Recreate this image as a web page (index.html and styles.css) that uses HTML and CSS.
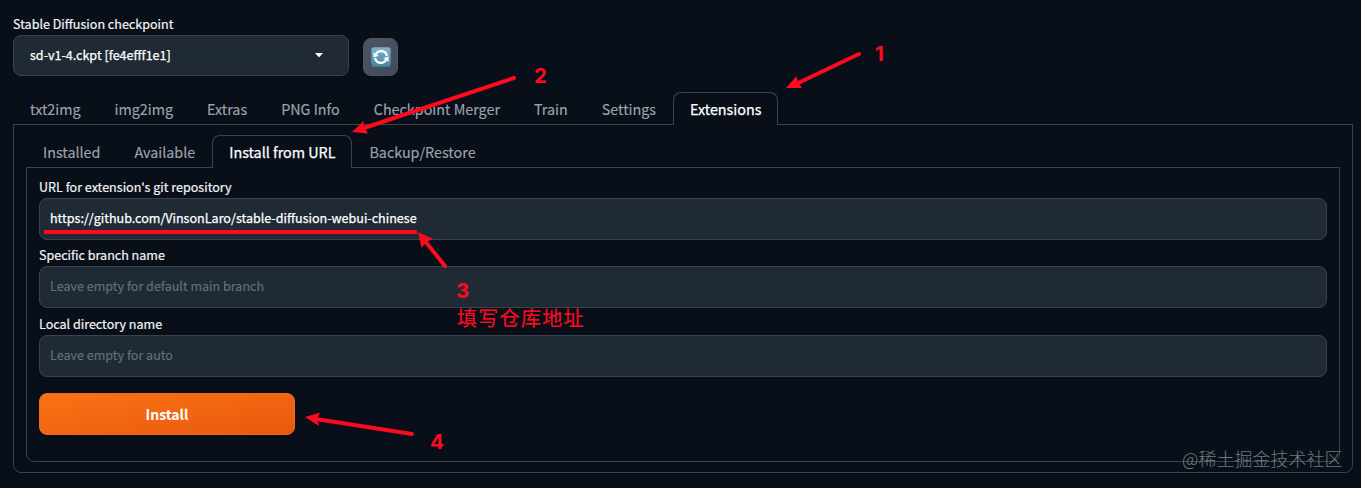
FILE: index.html
```html
<!DOCTYPE html>
<html lang="en">
<head>
<meta charset="utf-8">
<title>Stable Diffusion</title>
<link rel="stylesheet" href="styles.css">
</head>
<body>
<div class="app">
  <header class="quick">
    <div class="checkpoint">
      <span class="label">Stable Diffusion checkpoint</span>
      <div class="select"><span>sd-v1-4.ckpt [fe4efff1e1]</span>
        <svg width="8" height="5" viewBox="0 0 8 5"><path d="M0 0h8L4.600 3.800q-.6.6-1.200 0z" fill="#fff"/></svg>
      </div>
    </div>
    <button class="refresh" aria-label="Refresh">
      <svg width="20" height="20" viewBox="0 0 20 20">
        <defs><linearGradient id="tile" x1="0" y1="0" x2="0" y2="1"><stop offset="0" stop-color="#82b3c7"/><stop offset="1" stop-color="#4587a3"/></linearGradient></defs>
        <rect x=".3" y=".3" width="19.400" height="19.400" rx="2.600" fill="url(#tile)"/>
        <path d="M5 7A5.900 5.900 0 0 1 15.900 9M15 13A5.900 5.900 0 0 1 4.100 11" fill="none" stroke="#fff" stroke-width="2.200"/>
        <path d="M2.500 5.200v5.200l5.200-1.600zM17.500 14.800V9.600l-5.200 1.600z" fill="#fff"/>
      </svg>
    </button>
  </header>

  <nav class="tabs main-tabs">
    <span class="tab">txt2img</span><span class="tab">img2img</span><span class="tab">Extras</span><span class="tab">PNG Info</span><span class="tab">Checkpoint Merger</span><span class="tab">Train</span><span class="tab">Settings</span><span class="tab active">Extensions</span>
  </nav>
  <main class="panel outer">
    <nav class="tabs">
      <span class="tab">Installed</span><span class="tab">Available</span><span class="tab active">Install from URL</span><span class="tab">Backup/Restore</span>
    </nav>
    <section class="panel inner">
      <div class="field first"><span class="label">URL for extension's git repository</span><div class="input url">https://github.com/VinsonLaro/stable-diffusion-webui-chinese</div></div>
      <div class="field"><span class="label">Specific branch name</span><div class="input placeholder">Leave empty for default main branch</div></div>
      <div class="field last"><span class="label">Local directory name</span><div class="input placeholder">Leave empty for auto</div></div>
      <button class="install">Install</button>
    </section>
  </main>
</div>

<svg class="notes" width="1361" height="488" viewBox="0 0 1361 488">
  <g stroke="#fc0a20" stroke-width="4" stroke-linecap="round">
    <path d="M859 54L796 84"/>
    <path d="M514 78L364 128"/>
    <path d="M445 266L425 241"/>
    <path d="M412 434L316 419"/>
  </g>
  <path d="M44 232H417" stroke="#fc0a20" stroke-width="4"/>
  <g fill="#fc0a20">
    <path d="M786 88L796.500 76L798 82L802 88z"/>
    <path d="M352 132L363.500 121L364 127L368 133.500z"/>
    <path d="M418 232L433 239L426 242L421.500 248z"/>
    <path d="M305 417L320 412.500L317 419L319 426z"/>
  </g>
  <g class="digit">
    <text x="875" y="61">1</text><text x="534" y="83">2</text><text x="456" y="298">3</text><text x="430" y="449">4</text>
  </g>
  <text class="remark" x="457" y="326">填写仓库地址</text>
  <text class="watermark" x="1182" y="466">@稀土掘金技术社区</text>
</svg>
</body>
</html>
```
FILE: styles.css
```css
* { box-sizing: border-box; }

body {
  margin: 0;
  height: 488px;
  overflow: hidden;
  background: #090f18;
  color: #f3f4f6;
  font-family: "Noto Sans CJK SC", "Noto Sans", sans-serif;
}

.app { padding: 16px 8px 0 13px; }

.quick { display: flex; gap: 14px; height: 76px; }

.checkpoint { width: 336px; }

.label {
  display: block;
  height: 19px;
  line-height: 15px;
  font-size: 12.55px;
  white-space: nowrap;
  -webkit-text-stroke: .2px currentColor;
}

.select {
  display: flex;
  align-items: center;
  justify-content: space-between;
  height: 41px;
  padding: 0 25px 0 16px;
  border: 1px solid #37434e;
  border-radius: 8px;
  background: #1f2a35;
  color: #fff;
  font-size: 12.55px;
  line-height: 18px;
  -webkit-text-stroke: .25px currentColor;
}

.select span { padding-bottom: 2px; }

.refresh {
  display: grid;
  place-items: center;
  width: 35px;
  height: 38px;
  margin-top: 22px;
  padding: 0;
  border: 1px solid #4b5563;
  border-radius: 8px;
  background: linear-gradient(135deg, #4b5563, #434b59);
}

.tabs { display: flex; height: 33px; }

.tab {
  height: 33px;
  padding: 0 16px;
  border: 1px solid transparent;
  border-bottom: 0;
  color: #9ca3af;
  font-size: 14.33px;
  line-height: 31px;
  white-space: nowrap;
  -webkit-text-stroke: .15px currentColor;
}

.tab.active {
  position: relative;
  border-color: #3a444f;
  border-radius: 8px 8px 0 0;
  background: #090f18;
  color: #fff;
  -webkit-text-stroke: .25px currentColor;
}

.panel {
  margin-top: -1px;
  border: 1px solid #3a444f;
  border-radius: 0 0 8px 8px;
}

.outer { width: 1340px; height: 349px; padding: 10px 12px; }

.inner { height: 295px; padding: 11px 12px; }

.field { height: 69px; }

.field.first { height: 68px; }

.field.last { height: 68px; }

.input {
  height: 42px;
  padding: 0 10px;
  border: 1px solid #37434e;
  border-radius: 8px;
  background: #1f2a35;
  font-size: 12.55px;
  line-height: 37px;
}

.url { color: #fff; -webkit-text-stroke: .25px currentColor; }

.placeholder { color: #65707c; -webkit-text-stroke: .15px currentColor; }

.install {
  display: block;
  width: 256px;
  height: 42px;
  margin-top: 9px;
  padding: 0;
  border: 1px solid #f36a18;
  border-radius: 8px;
  background: linear-gradient(to bottom right, #f97316, #ea580c);
  color: #fff;
  font: 700 14px/40px "Noto Sans CJK SC", sans-serif;
}

.notes { position: absolute; top: 0; left: 0; }

.digit { fill: #fc0a20; font: 700 20.500px Inter, sans-serif; }

.remark { fill: #fc0a20; font-size: 20px; letter-spacing: 1.300px; stroke: #fc0a20; stroke-width: .2px; }

.watermark { fill: #747981; font-size: 18px; font-weight: 300; }
```
